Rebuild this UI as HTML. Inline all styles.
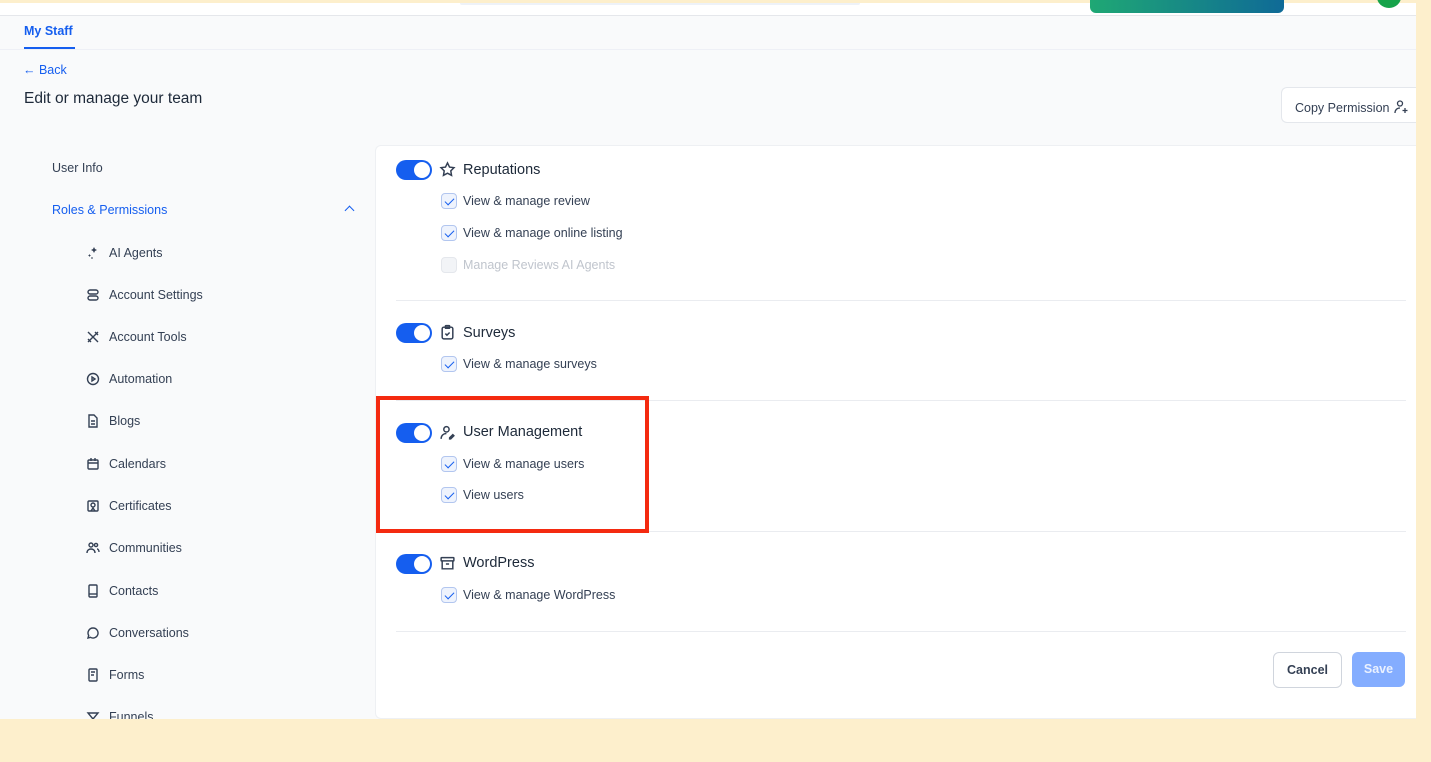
<!DOCTYPE html>
<html><head><meta charset="utf-8"><style>
*{box-sizing:border-box;margin:0;padding:0}
body{width:1431px;height:762px;background:#fdefcc;font-family:"Liberation Sans",sans-serif;position:relative;overflow:hidden;color:#344054}
.page{position:absolute;left:0;top:3px;width:1416px;height:716px;background:#f9fafb}
.topbar{position:absolute;left:0;top:3px;width:1416px;height:13px;background:#fff;border-bottom:1px solid #e5e7eb}
.abs{position:absolute}
.side{position:absolute;font-size:12.5px;color:#344054}
.side svg{position:absolute;left:-24px;top:-1px}
.card{position:absolute;left:375px;top:145px;width:1041px;height:574px;background:#fff;border:1px solid #eef0f3;border-right:none;border-radius:6px 0 0 6px}
.tg{position:absolute;width:36px;height:20px;border-radius:10px;background:#155eef}
.tg:after{content:"";position:absolute;right:2px;top:2px;width:16px;height:16px;border-radius:50%;background:#fff}
.ttl{position:absolute;font-size:14.5px;color:#1d2939}
.cb{position:absolute;width:16px;height:16px;border:1px solid #b2c6ef;background:#eef3fd;border-radius:4px}
.cb:after{content:"";position:absolute;left:5px;top:2px;width:4px;height:8px;border:solid #155eef;border-width:0 1.6px 1.6px 0;transform:rotate(45deg)}
.cb.dis{background:#f2f4f7;border-color:#e4e7ec}.cb.dis:after{display:none}
.it{position:absolute;font-size:12.5px;color:#344054}
.hr{position:absolute;left:396px;width:1010px;height:1px;background:#eaecf0}
.ic{position:absolute}
</style></head><body>
<div class="page"></div>
<div class="topbar"></div>
<div class="abs" style="left:460px;top:3px;width:400px;height:2px;background:#eef2f8;border-radius:0 0 4px 4px"></div>
<div class="abs" style="left:1090px;top:0;width:194px;height:13px;border-radius:0 0 6px 6px;background:linear-gradient(90deg,#1fa874,#0f6a97)"></div>
<div class="abs" style="left:1377px;top:-14px;width:24px;height:22px;border-radius:50%;background:#16a34a"></div>
<div class="abs" style="left:0;top:49px;width:1416px;height:1px;background:#eef0f6"></div>
<div class="abs" style="left:24px;top:24px;font-size:12.5px;font-weight:bold;color:#155eef">My Staff</div>
<div class="abs" style="left:24px;top:47px;width:51px;height:2px;background:#155eef"></div>
<div class="abs" style="left:23px;top:63px;font-size:12.5px;color:#155eef">← Back</div>
<div class="abs" style="left:24px;top:90px;font-size:15.5px;color:#1d2939">Edit or manage your team</div>
<div class="abs" style="left:1281px;top:87px;width:135px;height:36px;background:#fff;border:1px solid #e4e7ec;border-right:none;border-radius:6px 0 0 6px;font-size:12.5px;color:#344054;padding:11px 0 0 13px;white-space:nowrap">Copy Permission <svg width="16" height="16" viewBox="0 0 16 16" fill="none" stroke="#344054" stroke-width="1.3" style="vertical-align:-3px"><circle cx="7" cy="4.5" r="2.5"/><path d="M2 14c0-3 2-5 5-5M12 9v5M9.5 11.5h5"/></svg></div>
<div class="side" style="left:52px;top:161px">User Info</div>
<div class="side" style="left:52px;top:203px;color:#155eef">Roles &amp; Permissions</div>
<div class="abs" style="left:346px;top:207px;width:7px;height:7px;border:solid #155eef;border-width:1.5px 0 0 1.5px;transform:rotate(45deg)"></div>
<div class="side" style="left:109px;top:246px"><svg width="16" height="16" viewBox="0 0 16 16" fill="#344054"><path d="M9 2l1 2 2 1-2 1-1 2-1-2-2-1 2-1z M4 9l1 1 1 0-1 1 0 1-1-1-1 0 1-1z M7 12l1 1-1 1-1-1z"/></svg>AI Agents</div>
<div class="side" style="left:109px;top:288px"><svg width="16" height="16" viewBox="0 0 16 16" fill="none" stroke="#344054" stroke-width="1.4"><rect x="3" y="3" width="10" height="4" rx="2"/><rect x="3" y="9" width="10" height="4" rx="2"/></svg>Account Settings</div>
<div class="side" style="left:109px;top:330px"><svg width="16" height="16" viewBox="0 0 16 16" fill="none" stroke="#344054" stroke-width="1.4"><path d="M3 3l10 10M13 3L3 13M10 3l3 3M3 10l3 3"/></svg>Account Tools</div>
<div class="side" style="left:109px;top:372px"><svg width="16" height="16" viewBox="0 0 16 16" fill="none" stroke="#344054" stroke-width="1.4"><circle cx="8" cy="8" r="5.5"/><path d="M7 6l3 2-3 2z"/></svg>Automation</div>
<div class="side" style="left:109px;top:414px"><svg width="16" height="16" viewBox="0 0 16 16" fill="none" stroke="#344054" stroke-width="1.4"><path d="M4 2h5l3 3v9H4z M6 8h4M6 11h4"/></svg>Blogs</div>
<div class="side" style="left:109px;top:457px"><svg width="16" height="16" viewBox="0 0 16 16" fill="none" stroke="#344054" stroke-width="1.4"><rect x="3" y="4" width="10" height="9" rx="1"/><path d="M3 7h10M6 2v3M10 2v3"/></svg>Calendars</div>
<div class="side" style="left:109px;top:499px"><svg width="16" height="16" viewBox="0 0 16 16" fill="none" stroke="#344054" stroke-width="1.4"><rect x="3" y="3" width="10" height="10" rx="1"/><circle cx="8" cy="7" r="2"/><path d="M6 13l2-3 2 3"/></svg>Certificates</div>
<div class="side" style="left:109px;top:541px"><svg width="16" height="16" viewBox="0 0 16 16" fill="none" stroke="#344054" stroke-width="1.4"><circle cx="6" cy="5" r="2"/><circle cx="11" cy="5" r="1.6"/><path d="M2 13c0-3 2-4 4-4s4 1 4 4M12 9c1 0 2 1 2 3"/></svg>Communities</div>
<div class="side" style="left:109px;top:584px"><svg width="16" height="16" viewBox="0 0 16 16" fill="none" stroke="#344054" stroke-width="1.4"><rect x="4" y="2" width="8" height="12" rx="1"/><path d="M4 11h8"/></svg>Contacts</div>
<div class="side" style="left:109px;top:626px"><svg width="16" height="16" viewBox="0 0 16 16" fill="none" stroke="#344054" stroke-width="1.4"><path d="M8 3a5 5 0 1 1-2.5 9.3L3 13l.7-2.5A5 5 0 0 1 8 3z"/></svg>Conversations</div>
<div class="side" style="left:109px;top:668px"><svg width="16" height="16" viewBox="0 0 16 16" fill="none" stroke="#344054" stroke-width="1.4"><rect x="4" y="2" width="8" height="12" rx="1"/><path d="M6 5h4M6 8h3"/></svg>Forms</div>
<div class="side" style="left:109px;top:710px"><svg width="16" height="16" viewBox="0 0 16 16" fill="none" stroke="#344054" stroke-width="1.4"><path d="M3 4h10L8 10z"/></svg>Funnels</div>
<div class="abs" style="left:0;top:719px;width:1431px;height:43px;background:#fdefcc"></div>
<div class="card"></div>
<div class="tg" style="left:396px;top:160px"></div>
<svg class="ic" style="left:439px;top:161px" width="17" height="17" viewBox="0 0 16 16" fill="none" stroke="#344054" stroke-width="1.4"><path d="M8 1.8l1.9 3.9 4.2.6-3 3 .7 4.2L8 11.5l-3.8 2 .7-4.2-3-3 4.2-.6z"/></svg>
<div class="ttl" style="left:463px;top:162px">Reputations</div>
<div class="cb" style="left:441px;top:193px"></div><div class="it" style="left:463px;top:194px">View &amp; manage review</div>
<div class="cb" style="left:441px;top:225px"></div><div class="it" style="left:463px;top:226px">View &amp; manage online listing</div>
<div class="cb dis" style="left:441px;top:257px"></div><div class="it" style="left:463px;top:258px;color:#c0c5cd">Manage Reviews AI Agents</div>
<div class="hr" style="top:300px"></div>
<div class="tg" style="left:396px;top:323px"></div>
<svg class="ic" style="left:439px;top:324px" width="17" height="17" viewBox="0 0 16 16" fill="none" stroke="#344054" stroke-width="1.4"><rect x="3" y="3" width="10" height="11" rx="1.5"/><rect x="6" y="1.5" width="4" height="2.5" rx=".5"/><path d="M6 9l1.5 1.5L10 8"/></svg>
<div class="ttl" style="left:463px;top:325px">Surveys</div>
<div class="cb" style="left:441px;top:356px"></div><div class="it" style="left:463px;top:357px">View &amp; manage surveys</div>
<div class="hr" style="top:400px"></div>
<div class="tg" style="left:396px;top:423px"></div>
<svg class="ic" style="left:439px;top:424px" width="17" height="17" viewBox="0 0 16 16" fill="none" stroke="#344054" stroke-width="1.4"><circle cx="7" cy="5" r="2.5"/><path d="M2 14c0-3 2-5 5-5M10 13l3-3 1 1-3 3h-1z"/></svg>
<div class="ttl" style="left:463px;top:424px">User Management</div>
<div class="cb" style="left:441px;top:456px"></div><div class="it" style="left:463px;top:457px">View &amp; manage users</div>
<div class="cb" style="left:441px;top:487px"></div><div class="it" style="left:463px;top:488px">View users</div>
<div class="hr" style="top:531px"></div>
<div class="tg" style="left:396px;top:554px"></div>
<svg class="ic" style="left:439px;top:555px" width="17" height="17" viewBox="0 0 16 16" fill="none" stroke="#344054" stroke-width="1.4"><rect x="2" y="2.5" width="12" height="3" rx=".5"/><path d="M3 5.5V13h10V5.5M6.5 8.5h3"/></svg>
<div class="ttl" style="left:463px;top:555px">WordPress</div>
<div class="cb" style="left:441px;top:587px"></div><div class="it" style="left:463px;top:588px">View &amp; manage WordPress</div>
<div class="hr" style="top:631px"></div>
<div class="abs" style="left:376px;top:396px;width:273px;height:137px;border:4px solid #f42a10"></div>
<div class="abs" style="left:1273px;top:652px;width:69px;height:36px;border:1px solid #d0d5dd;border-radius:6px;background:#fff;font-size:12.5px;font-weight:bold;color:#344054;text-align:center;line-height:34px">Cancel</div>
<div class="abs" style="left:1352px;top:652px;width:53px;height:35px;border-radius:6px;background:#84adff;font-size:12.5px;font-weight:bold;color:#eaf1ff;text-align:center;line-height:35px">Save</div>
</body></html>
